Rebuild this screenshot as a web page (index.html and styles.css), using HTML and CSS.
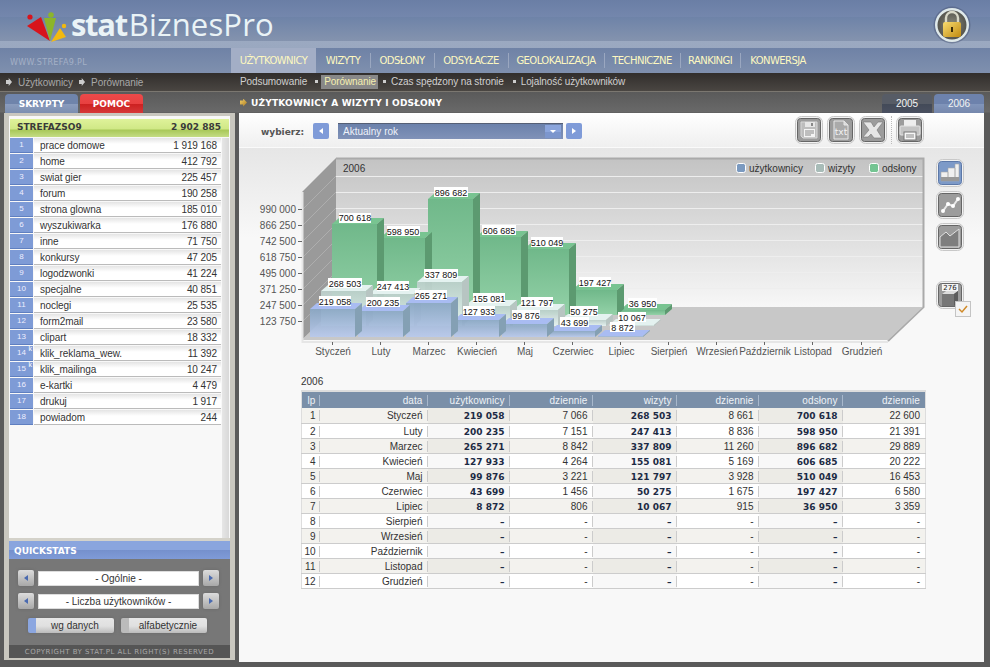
FILE: index.html
```html
<!DOCTYPE html>
<html lang="pl">
<head>
<meta charset="utf-8">
<title>statBiznesPro</title>
<link rel="stylesheet" href="styles.css">
</head>
<body>
<div class="app">
  <header class="banner">
    <svg class="logo" width="42" height="32" viewBox="0 0 42 32">
      <path d="M1 14 15 5 24 29z" fill="#d8141c"/>
      <circle cx="4" cy="5" r="2.6" fill="#d8141c"/>
      <path d="M18 6 30 6 24 29z" fill="#8cb52a"/>
      <circle cx="25" cy="3" r="2.8" fill="#8cb52a"/>
      <path d="M34 16 40 25 25 30z" fill="#f2b90f"/>
      <circle cx="38" cy="14" r="2.2" fill="#f2b90f"/>
    </svg>
    <div class="wordmark"><b>stat</b>BiznesPro</div>
    <svg class="lock" width="38" height="38" viewBox="0 0 38 38">
      <defs>
        <linearGradient id="gold" x1="0" y1="0" x2="1" y2="1"><stop offset="0" stop-color="#f8dc70"/><stop offset="1" stop-color="#c08a10"/></linearGradient>
        <radialGradient id="disc"><stop offset="0" stop-color="#8a8a7c"/><stop offset="1" stop-color="#55554e"/></radialGradient>
      </defs>
      <circle cx="19" cy="19" r="18.5" fill="#4c5878" opacity=".5"/>
      <circle cx="19" cy="19" r="17" fill="#dfe9ea"/>
      <circle cx="19" cy="19" r="14.5" fill="url(#disc)"/>
      <path d="M13 17v-5a6 6 0 0 1 12 0v5" fill="none" stroke="#d8d8c8" stroke-width="2.4"/>
      <rect x="10" y="16" width="18" height="15" rx="2" fill="url(#gold)"/>
      <path d="M19 21v5" stroke="#3a2c08" stroke-width="2"/>
    </svg>
  </header>

  <nav class="nav">
    <div class="site">WWW.STREFA9.PL</div>
    <ul class="menu">
      <li class="menu-item active">UŻYTKOWNICY</li>
      <li class="menu-item">WIZYTY</li>
      <li class="menu-item sep">ODSŁONY</li>
      <li class="menu-item sep">ODSYŁACZE</li>
      <li class="menu-item sep">GEOLOKALIZACJA</li>
      <li class="menu-item sep">TECHNICZNE</li>
      <li class="menu-item sep">RANKINGI</li>
      <li class="menu-item sep">KONWERSJA</li>
    </ul>
  </nav>

  <div class="subnav">
    <div class="crumbs">
      <span class="crumb">Użytkownicy</span>
      <span class="crumb">Porównanie</span>
    </div>
    <div class="subitems">
      <span class="subitem">Podsumowanie</span>
      <span class="subitem square current">Porównanie</span>
      <span class="subitem square">Czas spędzony na stronie</span>
      <span class="subitem square">Lojalność użytkowników</span>
    </div>
  </div>

  <div class="columns">
    <aside class="side">
      <div class="side-tabs">
        <span class="tab tab-blue">SKRYPTY</span>
        <span class="tab tab-red">POMOC</span>
      </div>
      <div class="panel">
        <div class="panel-inner">
          <div class="total"><span>STREFAZSO9</span><span>2 902 885</span></div>
          <div class="list-wrap">
            <ul class="list">
              <li class="row"><span class="num">1</span><span class="cell"><span>prace domowe</span><span>1 919 168</span></span></li>
              <li class="row"><span class="num">2</span><span class="cell"><span>home</span><span>412 792</span></span></li>
              <li class="row"><span class="num">3</span><span class="cell"><span>swiat gier</span><span>225 457</span></span></li>
              <li class="row"><span class="num">4</span><span class="cell"><span>forum</span><span>190 258</span></span></li>
              <li class="row"><span class="num">5</span><span class="cell"><span>strona glowna</span><span>185 010</span></span></li>
              <li class="row"><span class="num">6</span><span class="cell"><span>wyszukiwarka</span><span>176 880</span></span></li>
              <li class="row"><span class="num">7</span><span class="cell"><span>inne</span><span>71 750</span></span></li>
              <li class="row"><span class="num">8</span><span class="cell"><span>konkursy</span><span>47 205</span></span></li>
              <li class="row"><span class="num">9</span><span class="cell"><span>logodzwonki</span><span>41 224</span></span></li>
              <li class="row"><span class="num">10</span><span class="cell"><span>specjalne</span><span>40 851</span></span></li>
              <li class="row"><span class="num">11</span><span class="cell"><span>noclegi</span><span>25 535</span></span></li>
              <li class="row"><span class="num">12</span><span class="cell"><span>form2mail</span><span>23 580</span></span></li>
              <li class="row"><span class="num">13</span><span class="cell"><span>clipart</span><span>18 332</span></span></li>
              <li class="row"><span class="num">14<sup class="k">k</sup></span><span class="cell"><span>klik_reklama_wew.</span><span>11 392</span></span></li>
              <li class="row"><span class="num">15<sup class="k">k</sup></span><span class="cell"><span>klik_mailinga</span><span>10 247</span></span></li>
              <li class="row"><span class="num">16</span><span class="cell"><span>e-kartki</span><span>4 479</span></span></li>
              <li class="row"><span class="num">17</span><span class="cell"><span>drukuj</span><span>1 917</span></span></li>
              <li class="row"><span class="num">18</span><span class="cell"><span>powiadom</span><span>244</span></span></li>
            </ul>
            <div class="track"></div>
          </div>
          <section class="quick">
            <h2 class="quick-title">QUICKSTATS</h2>
            <div class="quick-body">
              <div class="pick"><span class="ab prev"></span><span class="field">- Ogólnie -</span><span class="ab next"></span></div>
              <div class="pick"><span class="ab prev"></span><span class="field">- Liczba użytkowników -</span><span class="ab next"></span></div>
              <div class="sorts">
                <span class="sort on">wg danych</span>
                <span class="sort">alfabetycznie</span>
              </div>
            </div>
            <div class="copy">COPYRIGHT BY STAT.PL ALL RIGHT(S) RESERVED</div>
          </section>
        </div>
      </div>
    </aside>

    <main class="main">
      <div class="main-head">
        <h1 class="title">UŻYTKOWNICY A WIZYTY I ODSŁONY</h1>
        <div class="years">
          <span class="year">2005</span>
          <span class="year cur">2006</span>
        </div>
      </div>
      <div class="content">
        <div class="toolbar">
          <span class="pick-label">wybierz:</span>
          <span class="nb prev"></span>
          <div class="select"><span>Aktualny rok</span><span class="drop"></span></div>
          <span class="nb next"></span>
          <div class="tools">
            <svg class="tool" width="28" height="28" viewBox="0 0 28 28"><rect x=".5" y=".5" width="27" height="27" rx="6" fill="#f2f2f2" stroke="#c8c8c8"/><rect x="2.5" y="2.5" width="23" height="23" rx="3" fill="#9c9c9c" stroke="#666"/><path d="M6 6h16v16H8l-2-2z" fill="#bdbdbd" stroke="#d8d8d8"/><rect x="10" y="6" width="10" height="5" fill="#e6e6e6"/><rect x="16" y="7" width="2" height="3" fill="#888"/><rect x="9" y="13" width="11" height="8" fill="#f4f4f4"/><path d="M10 15h9M10 17h9M10 19h6" stroke="#888"/></svg>
            <svg class="tool" width="28" height="28" viewBox="0 0 28 28"><rect x=".5" y=".5" width="27" height="27" rx="6" fill="#f2f2f2" stroke="#c8c8c8"/><rect x="2.5" y="2.5" width="23" height="23" rx="3" fill="#9c9c9c" stroke="#666"/><path d="M7 5h10l4 4v14H7z" fill="#aaa" stroke="#e8e8e8"/><path d="M17 5v4h4" fill="#d8d8d8" stroke="#e8e8e8"/><text class="txt-ico" x="14" y="19">txt</text></svg>
            <svg class="tool" width="28" height="28" viewBox="0 0 28 28"><rect x=".5" y=".5" width="27" height="27" rx="6" fill="#f2f2f2" stroke="#c8c8c8"/><rect x="2.5" y="2.5" width="23" height="23" rx="3" fill="#9c9c9c" stroke="#666"/><path d="M4 6h8l3 5 4-5h5l-6 8 5 8h-8l-3-4-3 3H4l6-7z" fill="#e6e6e6" stroke="#777" stroke-width=".6"/></svg>
            <span class="dots"></span>
            <svg class="tool" width="28" height="28" viewBox="0 0 28 28"><rect x=".5" y=".5" width="27" height="27" rx="6" fill="#f2f2f2" stroke="#c8c8c8"/><rect x="2.5" y="2.5" width="23" height="23" rx="3" fill="#9c9c9c" stroke="#666"/><rect x="8" y="4" width="12" height="7" fill="#eee"/><rect x="4" y="10" width="20" height="9" rx="1" fill="#c4c4c4" stroke="#e4e4e4"/><rect x="8" y="16" width="12" height="8" fill="#f6f6f6" stroke="#777"/><path d="M10 19h8M10 21h8" stroke="#888"/></svg>
          </div>
        </div>
        <div class="chart-row">
          <svg class="chart" width="690" height="225" viewBox="239 148 690 225">
            <defs>
              <linearGradient id="wall" x1="0" y1="0" x2="0" y2="1"><stop offset="0" stop-color="#c3c3c3"/><stop offset="1" stop-color="#f7f7f7"/></linearGradient>
              <linearGradient id="fg" x1="0" y1="0" x2="0" y2="1"><stop offset="0" stop-color="#70b88a"/><stop offset="1" stop-color="#94d2a8"/></linearGradient>
              <linearGradient id="fw" x1="0" y1="0" x2="0" y2="1"><stop offset="0" stop-color="#bccfcb"/><stop offset="1" stop-color="#e6f4f1"/></linearGradient>
              <linearGradient id="fb" x1="0" y1="0" x2="0" y2="1"><stop offset="0" stop-color="#8aa7c4"/><stop offset="1" stop-color="#b8c9ec"/></linearGradient>
            </defs>
            <rect x="336" y="158" width="587" height="149" fill="url(#wall)"/>
            <path class="gridline" d="M336 176.500H923M336 192.500H923M336 208.500H923M336 224.500H923M336 240.500H923M336 256.500H923M336 272.500H923M336 288.500H923"/>
            <path class="rim" d="M336 158.500H923.500V307L888 341"/>
            <path class="lwall" d="M336 158 302 192V340L336 307z"/>
            <path class="lwall-line" d="M336 176 302 210M336 192 302 226M336 208 302 242M336 224 302 258M336 240 302 274M336 256 302 290M336 272 302 306M336 288 302 322"/>
            <path class="floor" d="M336 307H923L888 340H302z"/>
            <path class="lip" d="M302.500 192V342H888"/>
            <path class="tick" d="M332.500 342v3M380.500 342v3M428.500 342v3M476.500 342v3M524.500 342v3M572.500 342v3M620.500 342v3M668.500 342v3M716.500 342v3M764.500 342v3M812.500 342v3M861.500 342v3M298 209.500h4M298 225.500h4M298 241.500h4M298 257.500h4M298 273.500h4M298 289.500h4M298 305.500h4M298 321.500h4"/>

            <g fill="url(#fg)" class="s-green">
              <g><rect x="620" y="310" width="45" height="5"/><path class="top" d="M620 310l7-6h45l-7 6z"/><path class="sd" d="M665 310l7-6v5l-7 6z"/></g>
              <g><rect x="572" y="290" width="45" height="25"/><path class="top" d="M572 290l7-6h45l-7 6z"/><path class="sd" d="M617 290l7-6v25l-7 6z"/></g>
              <g><rect x="524" y="249" width="45" height="66"/><path class="top" d="M524 249l7-6h45l-7 6z"/><path class="sd" d="M569 249l7-6v66l-7 6z"/></g>
              <g><rect x="476" y="237" width="45" height="78"/><path class="top" d="M476 237l7-6h45l-7 6z"/><path class="sd" d="M521 237l7-6v78l-7 6z"/></g>
              <g><rect x="428" y="199" width="45" height="116"/><path class="top" d="M428 199l7-6h45l-7 6z"/><path class="sd" d="M473 199l7-6v116l-7 6z"/></g>
              <g><rect x="380" y="238" width="45" height="77"/><path class="top" d="M380 238l7-6h45l-7 6z"/><path class="sd" d="M425 238l7-6v77l-7 6z"/></g>
              <g><rect x="332" y="224" width="45" height="91"/><path class="top" d="M332 224l7-6h45l-7 6z"/><path class="sd" d="M377 224l7-6v91l-7 6z"/></g>
            </g>
            <g fill="url(#fw)" class="s-white">
              <g><rect x="609" y="325" width="45" height="1"/><path class="top" d="M609 325l7-6h45l-7 6z"/><path class="sd" d="M654 325l7-6v1l-7 6z"/></g>
              <g><rect x="561" y="320" width="45" height="6"/><path class="top" d="M561 320l7-6h45l-7 6z"/><path class="sd" d="M606 320l7-6v6l-7 6z"/></g>
              <g><rect x="513" y="310" width="45" height="16"/><path class="top" d="M513 310l7-6h45l-7 6z"/><path class="sd" d="M558 310l7-6v16l-7 6z"/></g>
              <g><rect x="465" y="306" width="45" height="20"/><path class="top" d="M465 306l7-6h45l-7 6z"/><path class="sd" d="M510 306l7-6v20l-7 6z"/></g>
              <g><rect x="417" y="282" width="45" height="44"/><path class="top" d="M417 282l7-6h45l-7 6z"/><path class="sd" d="M462 282l7-6v44l-7 6z"/></g>
              <g><rect x="369" y="294" width="45" height="32"/><path class="top" d="M369 294l7-6h45l-7 6z"/><path class="sd" d="M414 294l7-6v32l-7 6z"/></g>
              <g><rect x="321" y="291" width="45" height="35"/><path class="top" d="M321 291l7-6h45l-7 6z"/><path class="sd" d="M366 291l7-6v35l-7 6z"/></g>
            </g>
            <g fill="url(#fb)" class="s-blue">
              <g><rect x="598" y="336" width="45" height="1"/><path class="top" d="M598 336l7-6h45l-7 6z"/><path class="sd" d="M643 336l7-6v1l-7 6z"/></g>
              <g><rect x="550" y="331" width="45" height="6"/><path class="top" d="M550 331l7-6h45l-7 6z"/><path class="sd" d="M595 331l7-6v6l-7 6z"/></g>
              <g><rect x="502" y="324" width="45" height="13"/><path class="top" d="M502 324l7-6h45l-7 6z"/><path class="sd" d="M547 324l7-6v13l-7 6z"/></g>
              <g><rect x="454" y="320" width="45" height="17"/><path class="top" d="M454 320l7-6h45l-7 6z"/><path class="sd" d="M499 320l7-6v17l-7 6z"/></g>
              <g><rect x="406" y="303" width="45" height="34"/><path class="top" d="M406 303l7-6h45l-7 6z"/><path class="sd" d="M451 303l7-6v34l-7 6z"/></g>
              <g><rect x="358" y="311" width="45" height="26"/><path class="top" d="M358 311l7-6h45l-7 6z"/><path class="sd" d="M403 311l7-6v26l-7 6z"/></g>
              <g><rect x="310" y="309" width="45" height="28"/><path class="top" d="M310 309l7-6h45l-7 6z"/><path class="sd" d="M355 309l7-6v28l-7 6z"/></g>
            </g>

            <g class="lbl-bg">
              <rect x="339" y="213" width="32" height="10"/><rect x="387" y="226" width="33" height="10"/><rect x="434" y="187" width="34" height="10"/><rect x="482" y="225" width="34" height="10"/><rect x="531" y="237" width="32" height="10"/><rect x="579" y="277" width="32" height="10"/><rect x="628" y="298" width="29" height="10"/>
              <rect x="328" y="278" width="34" height="10"/><rect x="377" y="281" width="32" height="10"/><rect x="424" y="269" width="34" height="10"/><rect x="473" y="293" width="32" height="10"/><rect x="521" y="297" width="32" height="10"/><rect x="570" y="306" width="28" height="10"/><rect x="618" y="312" width="28" height="10"/>
              <rect x="319" y="296" width="32" height="10"/><rect x="366" y="297" width="34" height="10"/><rect x="415" y="290" width="32" height="10"/><rect x="463" y="306" width="32" height="10"/><rect x="512" y="310" width="28" height="10"/><rect x="560" y="317" width="29" height="10"/><rect x="610" y="322" width="25" height="10"/>
            </g>
            <g class="lbl">
              <text x="355" y="221">700 618</text><text x="403" y="234.500">598 950</text><text x="451" y="195.500">896 682</text><text x="499" y="233.500">606 685</text><text x="547" y="245.500">510 049</text><text x="595" y="285.500">197 427</text><text x="642.500" y="306.500">36 950</text>
              <text x="345" y="286.500">268 503</text><text x="393" y="289.500">247 413</text><text x="441" y="277.500">337 809</text><text x="489" y="301.500">155 081</text><text x="537" y="305.500">121 797</text><text x="584" y="314.500">50 275</text><text x="632" y="320.500">10 067</text>
              <text x="335" y="304.500">219 058</text><text x="383" y="305.500">200 235</text><text x="431" y="298.500">265 271</text><text x="479" y="314.500">127 933</text><text x="526" y="318.500">99 876</text><text x="574.500" y="325.500">43 699</text><text x="622.500" y="330.500">8 872</text>
            </g>
            <g class="ylab">
              <text x="296" y="212.500">990 000</text><text x="296" y="228.500">866 250</text><text x="296" y="244.500">742 500</text><text x="296" y="260.500">618 750</text><text x="296" y="276.500">495 000</text><text x="296" y="292.500">371 250</text><text x="296" y="308.500">247 500</text><text x="296" y="324.500">123 750</text>
            </g>
            <g class="xlab">
              <text x="333" y="355">Styczeń</text><text x="381" y="355">Luty</text><text x="429" y="355">Marzec</text><text x="477" y="355">Kwiecień</text><text x="525" y="355">Maj</text><text x="573" y="355">Czerwiec</text><text x="621.500" y="355">Lipiec</text><text x="669" y="355">Sierpień</text><text x="717" y="355">Wrzesień</text><text x="765" y="355">Październik</text><text x="813" y="355">Listopad</text><text x="862" y="355">Grudzień</text>
            </g>
            <text class="cap" x="343" y="172">2006</text>
            <g class="legend">
              <rect x="736.500" y="163.500" width="9" height="9" rx="2" fill="#7b9ac0"/><text x="749" y="172">użytkownicy</text>
              <rect x="815.500" y="163.500" width="9" height="9" rx="2" fill="#a8bcb8"/><text x="828" y="172">wizyty</text>
              <rect x="869.500" y="163.500" width="9" height="9" rx="2" fill="#74c492"/><text x="882" y="172">odsłony</text>
            </g>
          </svg>
          <div class="kinds">
            <svg width="28" height="28" viewBox="0 0 28 28"><rect x=".5" y=".5" width="27" height="27" rx="6" fill="#f2f2f2" stroke="#c8c8c8"/><rect x="2.500" y="2.500" width="23" height="23" rx="3" fill="#7d9ac8" stroke="#5c78a8"/><path d="M5 13h7v9H5zM12 9h7v13h-7zM19 5h4v17h-4z" fill="#f0f0f0" stroke="#aaa" stroke-width=".6"/><path d="M5 18h18v4H5z" fill="#999"/></svg>
            <svg width="28" height="28" viewBox="0 0 28 28"><rect x=".5" y=".5" width="27" height="27" rx="6" fill="#f2f2f2" stroke="#c8c8c8"/><rect x="2.500" y="2.500" width="23" height="23" rx="3" fill="#9c9c9c" stroke="#666"/><path d="M7 20 12 13 17 15 22 8" fill="none" stroke="#e8e8e8" stroke-width="2"/><circle cx="7" cy="20" r="2" fill="#fff"/><circle cx="12" cy="13" r="2" fill="#fff"/><circle cx="17" cy="15" r="2" fill="#fff"/><circle cx="22" cy="8" r="2" fill="#fff"/></svg>
            <svg width="28" height="28" viewBox="0 0 28 28"><rect x=".5" y=".5" width="27" height="27" rx="6" fill="#f2f2f2" stroke="#c8c8c8"/><rect x="2.500" y="2.500" width="23" height="23" rx="3" fill="#9c9c9c" stroke="#666"/><path d="M4 14 10 9 14 13 23 6V24H4z" fill="#7e7e7e" stroke="#e0e0e0"/></svg>
            <svg class="kind-box" width="35" height="36" viewBox="0 0 35 36"><rect x=".5" y=".5" width="27" height="27" rx="6" fill="#f2f2f2" stroke="#c8c8c8"/><rect x="2.500" y="2.500" width="23" height="23" rx="3" fill="#9c9c9c" stroke="#666"/><rect x="6" y="3" width="16" height="7" fill="#f4f4f4"/><text class="mini" x="14" y="9">276</text><path d="M6 13l4-3h12v12l-4 3H6z" fill="#777"/><path d="M6 13h12l4-3H10z" fill="#ddd"/><path d="M18 13v12l4-3V10z" fill="#5c5c5c"/><rect x="19.500" y="20.500" width="15" height="15" fill="#f4f4f4" stroke="#c4c4c4"/><path d="M23 28l3 3 5-6" fill="none" stroke="#d08a28" stroke-width="1.500"/></svg>
          </div>
        </div>
        <div class="tbl-cap">2006</div>
        <table class="tbl">
          <colgroup><col class="c-lp"><col class="c-data"><col class="c-a"><col class="c-b"><col class="c-c"><col class="c-d"><col class="c-e"><col class="c-f"></colgroup>
          <thead><tr><th>lp</th><th>data</th><th>użytkownicy</th><th>dziennie</th><th>wizyty</th><th>dziennie</th><th>odsłony</th><th>dziennie</th></tr></thead>
          <tbody>
            <tr><td>1</td><td>Styczeń</td><td class="b">219 058</td><td>7 066</td><td class="b">268 503</td><td>8 661</td><td class="b">700 618</td><td>22 600</td></tr>
            <tr><td>2</td><td>Luty</td><td class="b">200 235</td><td>7 151</td><td class="b">247 413</td><td>8 836</td><td class="b">598 950</td><td>21 391</td></tr>
            <tr><td>3</td><td>Marzec</td><td class="b">265 271</td><td>8 842</td><td class="b">337 809</td><td>11 260</td><td class="b">896 682</td><td>29 889</td></tr>
            <tr><td>4</td><td>Kwiecień</td><td class="b">127 933</td><td>4 264</td><td class="b">155 081</td><td>5 169</td><td class="b">606 685</td><td>20 222</td></tr>
            <tr><td>5</td><td>Maj</td><td class="b">99 876</td><td>3 221</td><td class="b">121 797</td><td>3 928</td><td class="b">510 049</td><td>16 453</td></tr>
            <tr><td>6</td><td>Czerwiec</td><td class="b">43 699</td><td>1 456</td><td class="b">50 275</td><td>1 675</td><td class="b">197 427</td><td>6 580</td></tr>
            <tr><td>7</td><td>Lipiec</td><td class="b">8 872</td><td>806</td><td class="b">10 067</td><td>915</td><td class="b">36 950</td><td>3 359</td></tr>
            <tr><td>8</td><td>Sierpień</td><td class="b">–</td><td>-</td><td class="b">–</td><td>-</td><td class="b">–</td><td>-</td></tr>
            <tr><td>9</td><td>Wrzesień</td><td class="b">–</td><td>-</td><td class="b">–</td><td>-</td><td class="b">–</td><td>-</td></tr>
            <tr><td>10</td><td>Październik</td><td class="b">–</td><td>-</td><td class="b">–</td><td>-</td><td class="b">–</td><td>-</td></tr>
            <tr><td>11</td><td>Listopad</td><td class="b">–</td><td>-</td><td class="b">–</td><td>-</td><td class="b">–</td><td>-</td></tr>
            <tr><td>12</td><td>Grudzień</td><td class="b">–</td><td>-</td><td class="b">–</td><td>-</td><td class="b">–</td><td>-</td></tr>
          </tbody>
        </table>
      </div>
    </main>
  </div>
</div>
</body>
</html>
```

FILE: styles.css
```css
* { box-sizing: border-box; }
html, body { margin: 0; padding: 0; }
body { font-family: "Liberation Sans", Arial, sans-serif; font-size: 10px; color: #333; background: #555; }
ul { list-style: none; margin: 0; padding: 0; }
h1, h2 { margin: 0; }

.app { width: 990px; height: 667px; display: flex; flex-direction: column; overflow: hidden; background: #575757; }

/* banner */
.banner {
  height: 48px; display: flex; align-items: flex-start; flex: none;
  background: linear-gradient(#6a7ea5 0, #7487ad 17px, #6e83a8 17px, #8493ae 41px, #9ba9c1 41px, #9aa8c0 48px);
}
.logo { margin: 12px 0 0 26px; flex: none; }
.wordmark { margin: 4px 0 0 3px; font: 400 31px/40px "Open Sans", sans-serif; letter-spacing: .15px; color: #eaf3f6; }
.wordmark b { font-weight: 700; margin-right: 2px; letter-spacing: -1.3px; }
.lock { margin: 6px 19px 0 auto; flex: none; }

/* nav */
.nav { height: 25px; flex: none; display: flex; background: linear-gradient(#6f82a6, #7f90ae); }
.site { width: 231px; padding: 10px 0 0 10px; font: 8px/10px "DejaVu Sans", sans-serif; letter-spacing: .35px; color: #a4b0c6; }
.menu { display: grid; grid-template-columns: 85px 54px 64px 74px 96px 76px 60px 76px; align-items: stretch; }
.menu-item { font: 10px/25px "DejaVu Sans", sans-serif; letter-spacing: -.55px; color: #fdf8c0; text-align: center; }
.menu-item.active { background: #a3aec6; }
.menu-item.sep { background: linear-gradient(#9aa7c0, #9aa7c0) left 5px / 1px 15px no-repeat; }

/* sub nav */
.subnav { height: 19px; flex: none; display: flex; background: linear-gradient(#312e2c, #4a4642); border-bottom: 1px solid #7b7770; color: #bbb; line-height: 17px; }
.crumbs { width: 240px; display: flex; padding-left: 6px; gap: 6px; color: #a8a8a8; }
.crumb { display: flex; align-items: center; gap: 6px; letter-spacing: -.05px; }
.crumb::before { content: ""; width: 6px; height: 8px; background: #ccc; clip-path: polygon(0 25%, 45% 25%, 45% 0, 100% 50%, 45% 100%, 45% 75%, 0 75%); }
.subitems { display: flex; color: #d0d0d0; }
.subitem { padding-right: 8px; letter-spacing: -.1px; }
.subitem.square { padding-left: 9px; background: linear-gradient(#ccc, #ccc) 1px 7px / 3px 3px no-repeat; }
.subitem.current { padding: 0 2px 0 9px; margin-right: 4px; color: #f5efb0; background: linear-gradient(#ccc, #ccc) 0 7px / 3px 3px no-repeat, linear-gradient(#888, #888) 6px 2px / calc(100% - 6px) 14px no-repeat; }

/* columns */
.columns { flex: 1; display: flex; min-height: 0; background: linear-gradient(#5a5a5a, #696969 20px, #5a5a5a 21px); }
.side { width: 238px; flex: none; display: flex; flex-direction: column; padding: 2px 3px 7px 4px; }
.side-tabs { height: 19px; display: flex; gap: 2px; padding-left: 1px; flex: none; }
.tab { width: 73px; border-radius: 4px 4px 0 0; text-align: center; color: #fff; font: 700 9px/20px "DejaVu Sans", sans-serif; }
.tab-blue { background: linear-gradient(#6f84ab, #6f84ab 10px, #8b9dbe 10px, #7b8eb0); }
.tab-red { width: 63px; background: linear-gradient(#ec4a4a, #e84040 10px, #cc2020 10px, #d63838); }

.panel { flex: 1; min-height: 0; background: #c9c7bf; padding: 3px 5px 2px; }
.panel-inner { height: 100%; background: #f8f8f8; display: flex; flex-direction: column; }
.total { margin: 3px 1px 1px; height: 18px; padding: 0 8px 0 7px; display: flex; justify-content: space-between; font: 700 9px/16px "DejaVu Sans", sans-serif; color: #3a3a3a; background: linear-gradient(#dff29a, #d0e886 10px, #a8c858 11px, #c4dc84); flex: none; }
.list-wrap { flex: 1; min-height: 0; display: flex; padding-left: 1px; }
.list { width: 211px; flex: none; }
.row { height: 16px; display: flex; padding-bottom: 1px; }
.num { width: 23px; flex: none; background: #7e9bd6; border-bottom: 1px solid #5f7fc0; color: #eef; font-size: 8px; line-height: 14px; text-align: center; position: relative; margin-right: 1px; }
.k { position: absolute; top: -2px; right: 1px; font-size: 7px; line-height: 9px; color: #fff; vertical-align: baseline; }
.cell { flex: 1; display: flex; justify-content: space-between; padding: 1px 4px 0 6px; background: linear-gradient(#e4e4e4, #fff 6px); border-bottom: 1px solid #bbb; line-height: 14px; color: #333; letter-spacing: -.08px; }
.track { width: 7px; margin-left: 1px; background: linear-gradient(90deg, #e6e6e6, #d8d8d8); }

.quick { flex: none; border-top: 3px solid #d4d2ca; }
.quick-title { height: 18px; padding-left: 5px; font: 700 9px/20px "DejaVu Sans", sans-serif; color: #fff; background: linear-gradient(#8aa5de, #8aa5de 9px, #7590cc 9px, #7f9bd8); }
.quick-body { height: 86px; background: #777; padding: 11px 0 0 9px; display: flex; flex-direction: column; gap: 7px; }
.pick { display: grid; grid-template-columns: 16px 161px 16px; column-gap: 4px; height: 16px; }
.field { height: 15px; margin-top: 1px; background: #fff; border: 1px solid #ddd; text-align: center; line-height: 13px; color: #333; }
.ab { display: flex; align-items: center; justify-content: center; border-radius: 2px; background: linear-gradient(#dcdcdc, #a8a8a8); box-shadow: 0 0 3px #666; }
.ab::before, .nb::before { content: ""; border: 3px solid transparent; }
.prev::before { border-left-width: 0; border-right: 4px solid #4a6ab0; }
.next::before { border-right-width: 0; border-left: 4px solid #4a6ab0; }
.sorts { display: flex; gap: 7px; padding-left: 10px; margin-top: 2px; }
.sort { width: 86px; height: 15px; line-height: 15px; text-align: center; padding-left: 8px; color: #333; background: linear-gradient(#bbb, #bbb) 0 0 / 8px 100% no-repeat, linear-gradient(#e6e6e6, #e0e0e0 8px, #bbb); border-radius: 2px; box-shadow: 0 0 3px #666; }
.sort.on { background: linear-gradient(#8ba6e0, #8ba6e0) 0 0 / 8px 100% no-repeat, linear-gradient(#e6e6e6, #e0e0e0 8px, #bbb); }
.copy { height: 13px; background: #555; color: #a8a8a8; font: 7px/14px "DejaVu Sans", sans-serif; text-align: center; letter-spacing: .5px; white-space: nowrap; }

/* main */
.main { width: 746px; flex: none; display: flex; flex-direction: column; padding-bottom: 5px; }
.main-head { height: 21px; flex: none; display: flex; justify-content: space-between; }
.title { display: flex; align-items: center; gap: 4px; font: 700 9px/22px "DejaVu Sans", sans-serif; color: #fff; margin-left: 2px; letter-spacing: .2px; }
.title::before { content: ""; width: 7px; height: 8px; background: linear-gradient(135deg, #f4d068, #a87820); clip-path: polygon(0 25%, 45% 25%, 45% 0, 100% 50%, 45% 100%, 45% 75%, 0 75%); }
.years { display: flex; gap: 2px; padding-top: 2px; }
.year { width: 50px; border-radius: 4px 4px 0 0; text-align: center; font-size: 10px; line-height: 20px; color: #f4f4f4; background: linear-gradient(#575c66, #575c66 10px, #434a58 10px, #4a5060); }
.year.cur { background: linear-gradient(#6d82ac, #6d82ac 10px, #8195bb 10px, #7688ad); }
.content { flex: 1; min-height: 0; margin: 0 0 0 1px; background: #f8f8f8; border-top: 1px solid #fff; }
.toolbar { height: 34px; display: flex; align-items: flex-start; background: linear-gradient(#fff, #efefef); border-bottom: 1px solid #fafafa; }
.pick-label { margin: 12px 0 0 22px; width: 52px; font: 700 9px/12px "DejaVu Sans", sans-serif; color: #555; }
.nb { width: 16px; height: 16px; margin-top: 9px; display: flex; align-items: center; justify-content: center; border-radius: 2px; background: #7f9bd8; }
.nb::before { border-color: transparent; }
.nb.prev::before { border-right-color: #fff; }
.nb.next::before { border-left-color: #fff; }
.select { width: 225px; height: 16px; margin: 9px 3px 0 9px; padding-left: 5px; display: flex; justify-content: space-between; border-top: 1px solid #555f75; color: #eef2fa; line-height: 15px; background: linear-gradient(#6b81ab, #8092b8); }
.drop { width: 16px; margin: 1px 2px 1px 0; background: linear-gradient(#8ba5dc, #8ba5dc 7px, #7c96cd 7px); display: flex; align-items: center; justify-content: center; }
.drop::before { content: ""; border: 3px solid transparent; border-top: 3px solid #fff; border-bottom-width: 0; }
.tools { margin: 2px 0 0 213px; display: flex; gap: 4px; }
.tool { display: block; }
.txt-ico { font: 9px "DejaVu Sans", sans-serif; fill: #f4f4f4; text-anchor: middle; }
.dots { width: 1px; height: 28px; border-left: 1px dotted #bbb; }

.chart-row { height: 225px; display: flex; background: linear-gradient(#e6e6e6, #f8f8f8 90px); }
.chart { display: block; flex: none; }
.gridline { stroke: #eee; fill: none; }
.rim { fill: none; stroke: #aaa; stroke-width: 2; }
.lwall { fill: #9a9a9a; }
.lwall-line { stroke: #aeaeae; fill: none; }
.floor { fill: #c8c8c8; }
.lip { fill: none; stroke: #e6e6e6; stroke-width: 2; }
.tick { stroke: #666; fill: none; }
.s-green .top { fill: #78c491; }
.s-green .sd { fill: #5c9a70; }
.s-white .top { fill: #e4f2f0; }
.s-white .sd { fill: #b7c5c2; }
.s-white rect, .s-blue rect { fill-opacity: .93; }
.s-blue .top { fill: #a9bcf2; }
.s-blue .sd { fill: #84a0b4; }
.lbl-bg rect { fill: #fff; }
.lbl text { font-size: 9px; fill: #111; text-anchor: middle; }
.ylab text { font-size: 10px; fill: #555; text-anchor: end; }
.xlab text { font-size: 10px; fill: #555; text-anchor: middle; }
.cap { font-size: 10px; fill: #333; }
.legend text { font-size: 10px; fill: #333; }
.legend rect { stroke: #fff; }
.kinds { display: flex; flex-direction: column; gap: 4px; padding: 11px 0 0 7px; }
.kinds svg { display: block; overflow: visible; }
.kind-box { margin-top: 26px; }
.mini { font: 7px "DejaVu Sans", sans-serif; fill: #222; text-anchor: middle; }

.tbl-cap { height: 17px; margin-left: 62px; line-height: 18px; color: #333; }
.tbl { margin-left: 62px; width: 624px; table-layout: fixed; border-collapse: collapse; border: 1px solid #ddd; border-top-width: 2px; }
.c-lp { width: 18px; } .c-data { width: 108px; } .c-a { width: 82px; } .c-b { width: 83px; } .c-c { width: 84px; } .c-d { width: 82px; } .c-e { width: 84px; } .c-f { width: 83px; }
.tbl th { height: 17px; padding: 0 5px 0 0; text-align: right; font-weight: 400; font-size: 10px; letter-spacing: .1px; color: #eef2f7; background: linear-gradient(#a8b8cc, #a8b8cc) right 3px / 1px 11px no-repeat, #7a8fa8; border: 0; }
.tbl th:first-child, .tbl td:first-child { padding-right: 4px; }
.tbl th:last-child { background: #7a8fa8; }
.tbl td { height: 15px; padding: 2px 5px 0 0; text-align: right; line-height: 12px; color: #333; border: 0; border-bottom: 1px solid #ccc; background: linear-gradient(#ccc, #ccc) right 2px / 1px 11px no-repeat, #fff; }
.tbl td:last-child { background: #fff; }
.tbl tr:nth-child(odd) td { background: linear-gradient(#ccc, #ccc) right 2px / 1px 11px no-repeat, #f3f2ee; }
.tbl tr:nth-child(odd) td:last-child { background: #f3f2ee; }
.tbl td.b { font: 700 9px/12px "DejaVu Sans", sans-serif; color: #1c2a44; background: linear-gradient(#ccc, #ccc) right 2px / 1px 11px no-repeat, #f8f8f8; }
.tbl tr:nth-child(odd) td.b { background: linear-gradient(#ccc, #ccc) right 2px / 1px 11px no-repeat, #ecebe6; }
```
